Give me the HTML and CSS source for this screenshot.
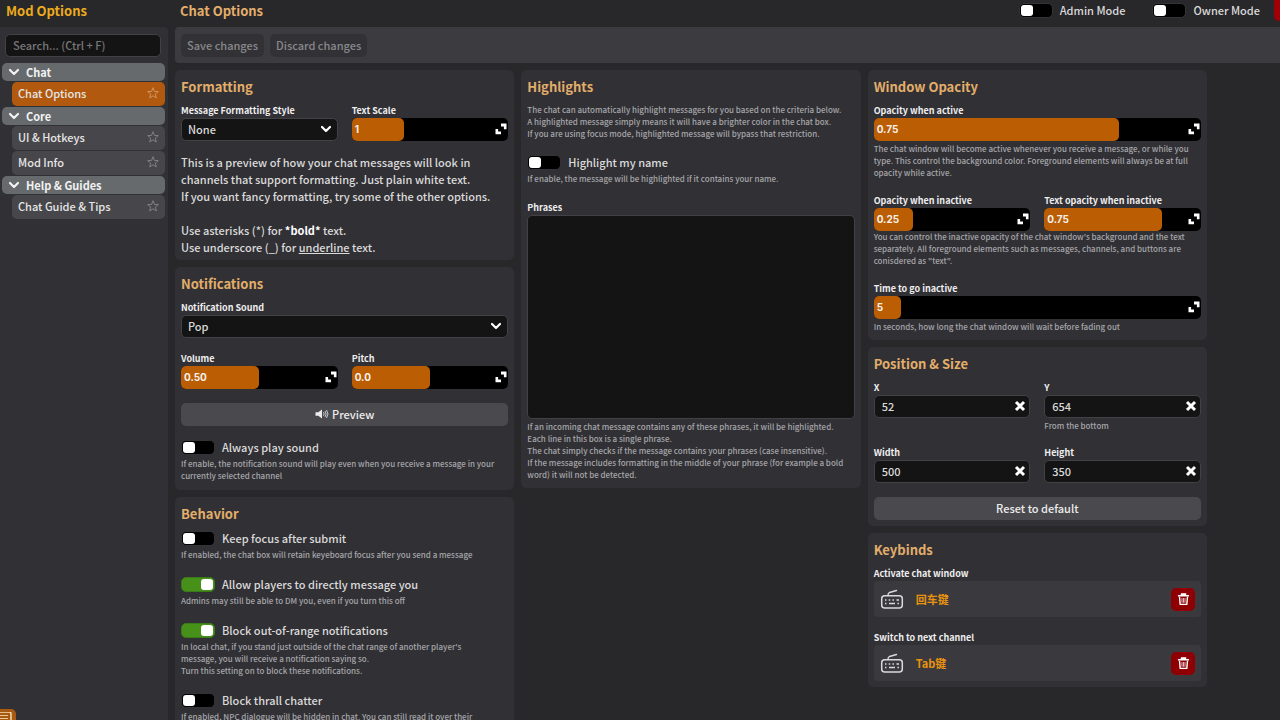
FILE: index.html
```html
<!DOCTYPE html>
<html lang="en">
<head>
<meta charset="UTF-8">
<meta name="viewport" content="width=device-width, initial-scale=1.0">
<title>Mod Options</title>
<link rel="stylesheet" href="styles.css">
</head>
<body>

<!-- shared icons -->
<svg class="sprite" width="0" height="0" aria-hidden="true">
  <symbol id="i-chevron" viewBox="0 0 12 12"><path d="M2 4l4 4 4-4" fill="none" stroke="currentColor" stroke-width="2.200" stroke-linecap="round" stroke-linejoin="round"/></symbol>
  <symbol id="i-star" viewBox="0 0 12 12"><path d="M6 .7l1.400 3.700 3.900.2-3 2.500 1 3.800L6 8.800l-3.300 2.100 1-3.800-3-2.500 3.900-.2z" fill="none" stroke="currentColor" stroke-width=".8" stroke-linejoin="round"/></symbol>
  <symbol id="i-expand" viewBox="0 0 12 12"><path d="M6 .5H11.500V6.200H8.900V3.600H6zM.5 6H3.100V8.500H6V11.200H.5z" fill="currentColor"/></symbol>
  <symbol id="i-cross" viewBox="0 0 12 12"><path d="M2 2l8 8M10 2l-8 8" fill="none" stroke="currentColor" stroke-width="3"/></symbol>
  <symbol id="i-speaker" viewBox="0 0 14 12"><path d="M.5 4.200h2.800L7 1.500v9L3.300 7.800H.5z" fill="currentColor"/><path d="M8.500 4.200q1.300 1.800 0 3.600M10 3q2.300 3 0 6M11.500 2q3 4 0 8" fill="none" stroke="currentColor" stroke-width=".8"/></symbol>
  <symbol id="i-keyboard" viewBox="0 0 24 20"><rect x="1.700" y="6.700" width="20.600" height="12.200" rx="3" fill="none" stroke="currentColor" stroke-width="1.500"/><path d="M8 6.500C8 2.500 11 3.500 16.500 1.500" fill="none" stroke="currentColor" stroke-width="1.400" stroke-linecap="round"/><path d="M5 11h1.500M8.700 11h1.500M12.400 11h1.500M16.500 11h2.500M5 14.500h1.500M9 14.500h6M17.500 14.500H19" stroke="currentColor" stroke-width="1.500"/></symbol>
  <symbol id="i-trash" viewBox="0 0 14 14"><path d="M1 3h12M5 2.500V1.200h4v1.300" fill="none" stroke="currentColor" stroke-width="1.800"/><path d="M2.700 4l.7 8.300h7.200l.7-8.300" fill="none" stroke="currentColor" stroke-width="1.500" stroke-linejoin="round"/><path d="M5.400 5.500v5M7 5.500v5M8.600 5.500v5" stroke="currentColor" stroke-width=".8"/></symbol>
</svg>

<div class="app">
  <aside class="sidebar">
    <h1 class="app-title">Mod Options</h1>
    <div class="sidebar-panel">
      <input class="text-box search" type="search" placeholder="Search... (Ctrl + F)" aria-label="Search">
      <nav class="nav">
        <button class="nav-group"><svg class="icon"><use href="#i-chevron"/></svg>Chat</button>
        <a class="nav-item active" href="#">Chat Options<svg class="icon"><use href="#i-star"/></svg></a>
        <button class="nav-group"><svg class="icon"><use href="#i-chevron"/></svg>Core</button>
        <a class="nav-item" href="#">UI &amp; Hotkeys<svg class="icon"><use href="#i-star"/></svg></a>
        <a class="nav-item" href="#">Mod Info<svg class="icon"><use href="#i-star"/></svg></a>
        <button class="nav-group"><svg class="icon"><use href="#i-chevron"/></svg>Help &amp; Guides</button>
        <a class="nav-item" href="#">Chat Guide &amp; Tips<svg class="icon"><use href="#i-star"/></svg></a>
      </nav>
    </div>
  </aside>

  <main class="main">
    <header class="header">
      <h2 class="page-title">Chat Options</h2>
      <div class="modes">
        <label class="toggle"><input type="checkbox">Admin Mode</label>
        <label class="toggle"><input type="checkbox">Owner Mode</label>
      </div>
    </header>

    <div class="toolbar">
      <button class="btn" disabled>Save changes</button>
      <button class="btn" disabled>Discard changes</button>
    </div>

    <div class="columns">
      <div class="column">
        <section class="card">
          <h3>Formatting</h3>
          <div class="row">
            <div class="field">
              <label for="style">Message Formatting Style</label>
              <div class="select">
                <select id="style"><option>None</option></select>
                <svg class="icon"><use href="#i-chevron"/></svg>
              </div>
            </div>
            <div class="field">
              <label for="scale">Text Scale</label>
              <div class="slider">
                <input id="scale" type="range" min="0" max="3" step="any" value="1">
                <span class="fill" style="width: 33.300%"></span>
                <output for="scale">1</output>
                <svg class="icon"><use href="#i-expand"/></svg>
              </div>
            </div>
          </div>
          <div class="sample">
            This is a preview of how your chat messages will look in channels that support formatting. Just plain white text.<br>
            If you want fancy formatting, try some of the other options.<br>
            <br>
            Use asterisks (*) for <b>*bold*</b> text.<br>
            Use underscore (_) for <u>underline</u> text.
          </div>
        </section>

        <section class="card">
          <h3>Notifications</h3>
          <div class="field">
            <label for="sound">Notification Sound</label>
            <div class="select">
              <select id="sound"><option>Pop</option></select>
              <svg class="icon"><use href="#i-chevron"/></svg>
            </div>
          </div>
          <div class="row">
            <div class="field">
              <label for="volume">Volume</label>
              <div class="slider">
                <input id="volume" type="range" min="0" max="1" step="any" value="0.5">
                <span class="fill" style="width: 50%"></span>
                <output for="volume">0.50</output>
                <svg class="icon"><use href="#i-expand"/></svg>
              </div>
            </div>
            <div class="field">
              <label for="pitch">Pitch</label>
              <div class="slider">
                <input id="pitch" type="range" min="-1" max="1" step="any" value="0">
                <span class="fill" style="width: 50%"></span>
                <output for="pitch">0.0</output>
                <svg class="icon"><use href="#i-expand"/></svg>
              </div>
            </div>
          </div>
          <button class="btn wide"><svg class="icon speaker"><use href="#i-speaker"/></svg>Preview</button>
          <div class="option">
            <label class="toggle"><input type="checkbox">Always play sound</label>
            <p class="help">If enable, the notification sound will play even when you receive a message in your currently selected channel</p>
          </div>
        </section>

        <section class="card">
          <h3>Behavior</h3>
          <div class="option">
            <label class="toggle"><input type="checkbox">Keep focus after submit</label>
            <p class="help">If enabled, the chat box will retain keyeboard focus after you send a message</p>
          </div>
          <div class="option">
            <label class="toggle"><input type="checkbox" checked>Allow players to directly message you</label>
            <p class="help">Admins may still be able to DM you, even if you turn this off</p>
          </div>
          <div class="option">
            <label class="toggle"><input type="checkbox" checked>Block out-of-range notifications</label>
            <p class="help">In local chat, if you stand just outside of the chat range of another player's<br>message, you will receive a notification saying so.<br>Turn this setting on to block these notifications.</p>
          </div>
          <div class="option">
            <label class="toggle"><input type="checkbox">Block thrall chatter</label>
            <p class="help">If enabled, NPC dialogue will be hidden in chat. You can still read it over their</p>
          </div>
        </section>
      </div>

      <div class="column">
        <section class="card">
          <h3>Highlights</h3>
          <p class="help intro">The chat can automatically highlight messages for you based on the criteria below.<br>A highlighted message simply means it will have a brighter color in the chat box.<br>If you are using focus mode, highlighted message will bypass that restriction.</p>
          <div class="option">
            <label class="toggle"><input type="checkbox">Highlight my name</label>
            <p class="help">If enable, the message will be highlighted if it contains your name.</p>
          </div>
          <div class="field">
            <label for="phrases">Phrases</label>
            <textarea class="text-box" id="phrases"></textarea>
            <p class="help">If an incoming chat message contains any of these phrases, it will be highlighted.<br>Each line in this box is a single phrase.<br>The chat simply checks if the message contains your phrases (case insensitive).<br>If the message includes formatting in the middle of your phrase (for example a bold word) it will not be detected.</p>
          </div>
        </section>
      </div>

      <div class="column">
        <section class="card">
          <h3>Window Opacity</h3>
          <div class="field">
            <label for="active">Opacity when active</label>
            <div class="slider">
              <input id="active" type="range" min="0" max="1" step="any" value="0.75">
              <span class="fill" style="width: 75%"></span>
              <output for="active">0.75</output>
              <svg class="icon"><use href="#i-expand"/></svg>
            </div>
            <p class="help">The chat window will become active whenever you receive a message, or while you type. This control the background color. Foreground elements will always be at full opacity while active.</p>
          </div>
          <div class="field">
            <div class="row">
              <div class="field">
                <label for="inactive">Opacity when inactive</label>
                <div class="slider">
                  <input id="inactive" type="range" min="0" max="1" step="any" value="0.25">
                  <span class="fill" style="width: 25%"></span>
                  <output for="inactive">0.25</output>
                  <svg class="icon"><use href="#i-expand"/></svg>
                </div>
              </div>
              <div class="field">
                <label for="text-inactive">Text opacity when inactive</label>
                <div class="slider">
                  <input id="text-inactive" type="range" min="0" max="1" step="any" value="0.75">
                  <span class="fill" style="width: 75%"></span>
                  <output for="text-inactive">0.75</output>
                  <svg class="icon"><use href="#i-expand"/></svg>
                </div>
              </div>
            </div>
            <p class="help">You can control the inactive opacity of the chat window's background and the text separately. All foreground elements such as messages, channels, and buttons are conisdered as "text".</p>
          </div>
          <div class="field">
            <label for="timeout">Time to go inactive</label>
            <div class="slider">
              <input id="timeout" type="range" min="0" max="60" step="any" value="5">
              <span class="fill" style="width: 8.300%"></span>
              <output for="timeout">5</output>
              <svg class="icon"><use href="#i-expand"/></svg>
            </div>
            <p class="help">In seconds, how long the chat window will wait before fading out</p>
          </div>
        </section>

        <section class="card">
          <h3>Position &amp; Size</h3>
          <div class="row">
            <div class="field">
              <label for="x">X</label>
              <div class="clearable">
                <input class="text-box" id="x" type="text" value="52">
                <button aria-label="Clear X"><svg class="icon"><use href="#i-cross"/></svg></button>
              </div>
            </div>
            <div class="field">
              <label for="y">Y</label>
              <div class="clearable">
                <input class="text-box" id="y" type="text" value="654">
                <button aria-label="Clear Y"><svg class="icon"><use href="#i-cross"/></svg></button>
              </div>
              <p class="help">From the bottom</p>
            </div>
          </div>
          <div class="row">
            <div class="field">
              <label for="width">Width</label>
              <div class="clearable">
                <input class="text-box" id="width" type="text" value="500">
                <button aria-label="Clear width"><svg class="icon"><use href="#i-cross"/></svg></button>
              </div>
            </div>
            <div class="field">
              <label for="height">Height</label>
              <div class="clearable">
                <input class="text-box" id="height" type="text" value="350">
                <button aria-label="Clear height"><svg class="icon"><use href="#i-cross"/></svg></button>
              </div>
            </div>
          </div>
          <button class="btn wide">Reset to default</button>
        </section>

        <section class="card">
          <h3>Keybinds</h3>
          <div class="field">
            <span class="label">Activate chat window</span>
            <div class="keybind">
              <svg class="keyboard"><use href="#i-keyboard"/></svg>
              <span class="key" lang="zh-CN">回车键</span>
              <button class="delete" aria-label="Remove keybind"><svg><use href="#i-trash"/></svg></button>
            </div>
          </div>
          <div class="field">
            <span class="label">Switch to next channel</span>
            <div class="keybind">
              <svg class="keyboard"><use href="#i-keyboard"/></svg>
              <span class="key" lang="zh-CN">Tab键</span>
              <button class="delete" aria-label="Remove keybind"><svg><use href="#i-trash"/></svg></button>
            </div>
          </div>
        </section>
      </div>
    </div>
  </main>
</div>

<button class="close" aria-label="Close"></button>
<button class="chat-corner" aria-label="Open chat"><svg viewBox="0 0 12 8"><path d="M0 0h9q2 0 2 2v6" fill="none" stroke="#f3dcb8" stroke-width="1.500"/><path d="M0 3.500h8M0 6.500h8" stroke="#e9c796" stroke-width="1"/></svg></button>

</body>
</html>
```
FILE: styles.css
```css
* {
  box-sizing: border-box;
}
body {
  margin: 0;
  height: 100vh;
  overflow: hidden;
  background-color: #28272a;
  color: #dadada;
  font-family: "Noto Sans CJK SC", "Noto Sans", sans-serif;
  font-size: 11px;
  font-weight: 500;
  line-height: 16px;
}
h1, h2, h3, p {
  margin: 0;
}
button, input, select, textarea {
  font: inherit;
  color: inherit;
  margin: 0;
}
button {
  border: none;
  padding: 0;
  background: none;
  cursor: pointer;
}
.sprite {
  position: absolute;
}
.icon {
  width: 12px;
  height: 12px;
  flex: none;
}

/* frame */
.app {
  display: flex;
  height: 100%;
}
.sidebar {
  width: 168px;
  flex: none;
  display: flex;
  flex-direction: column;
}
.main {
  flex: 1;
  min-width: 0;
  margin-left: 7px;
}
.app-title, .page-title {
  font-size: 13px;
  font-weight: bold;
  line-height: 21px;
}
.app-title {
  height: 27px;
  padding-left: 6px;
  color: #ecab1c;
}
.page-title, .card h3 {
  color: #e2ae6a;
}
.header {
  height: 27px;
  display: flex;
  justify-content: space-between;
  padding: 0 20px 0 5px;
}
.modes {
  display: flex;
  gap: 27px;
  padding-top: 3px;
}

/* sidebar */
.sidebar-panel {
  flex: 1;
  padding: 7px 3px 0 2px;
  background-color: #313035;
  border-top-right-radius: 4px;
}
.text-box {
  display: block;
  width: 100%;
  height: 23px;
  padding: 0 7px 2px;
  background-color: #141414;
  border: 1px solid #424146;
  border-radius: 5px;
  outline: none;
}
.search {
  width: auto;
  margin: 0 4px 6px 3px;
  min-width: 156px;
}
.search::placeholder {
  color: #77777a;
  opacity: 1;
}
.nav {
  display: flex;
  flex-direction: column;
}
.nav-group {
  display: flex;
  align-items: center;
  gap: 6px;
  height: 18px;
  padding-left: 6px;
  margin-bottom: 1px;
  background-color: #666a6c;
  border-radius: 5px;
  color: #f2f2f2;
  font-weight: bold;
}
.nav-item {
  display: flex;
  align-items: center;
  justify-content: space-between;
  height: 24px;
  padding: 0 6px 2px;
  margin: 0 0 1px 10px;
  background-color: #47464b;
  border-radius: 5px;
  color: #e6e6e6;
  text-decoration: none;
}
.nav-item .icon {
  color: #8e8e91;
}
.nav-item.active {
  background-color: #b0590f;
}
.nav-item.active .icon {
  color: #d8a273;
}

/* buttons */
.toolbar {
  display: flex;
  gap: 6px;
  padding: 7px 6px 6px;
  background-color: #3c3b40;
  border-radius: 4px 0 0 4px;
}
.btn {
  height: 23px;
  padding: 0 6px 2px;
  background-color: #4a494e;
  border-radius: 5px;
  color: #ececec;
}
.btn:disabled {
  background-color: #323236;
  color: #88888a;
  cursor: default;
}
.btn.wide {
  display: flex;
  align-items: center;
  justify-content: center;
  gap: 3px;
  width: 100%;
}
.speaker {
  width: 14px;
}

/* cards */
.columns {
  display: grid;
  grid-template-columns: repeat(3, minmax(0, 1fr));
  gap: 7px;
  padding: 7px 73px 0 0;
  align-items: start;
}
.column {
  display: flex;
  flex-direction: column;
  gap: 7px;
}
.card {
  display: flex;
  flex-direction: column;
  gap: 14px;
  padding: 6px;
  background-color: #313035;
  border-radius: 5px;
}
.card h3 {
  margin-bottom: -8px;
  font-size: 13px;
  font-weight: bold;
  line-height: 22px;
}
.row {
  display: grid;
  grid-template-columns: 1fr 1fr;
  gap: 14px;
}
.field > label, .label {
  display: block;
  font-size: 9px;
  font-weight: bold;
  line-height: 14px;
  color: #eeeeee;
}
.help {
  margin-top: 2px;
  font-size: 8px;
  line-height: 12px;
  color: #a6a6a9;
}
.help.intro, .row + .help {
  margin-top: 0;
}
.option .help {
  margin-bottom: 2px;
}
.help.intro, .card > .field > .help {
  margin-bottom: 1px;
}
.sample {
  margin: -1px 0 -2px;
  line-height: 17px;
}
.sample b {
  color: #ffffff;
}

/* controls */
.select {
  position: relative;
}
.select select {
  display: block;
  appearance: none;
  width: 100%;
  height: 23px;
  padding: 0 6px 2px;
  background-color: #141414;
  border: 1px solid #424146;
  border-radius: 5px;
}
.select .icon {
  position: absolute;
  right: 6px;
  top: 5px;
  color: #ffffff;
  pointer-events: none;
}
.slider {
  position: relative;
  height: 23px;
}
.slider input {
  display: block;
  appearance: none;
  width: 100%;
  height: 100%;
  background-color: #000000;
  border-radius: 5px;
}
.slider input::-webkit-slider-thumb {
  appearance: none;
  width: 1px;
  height: 23px;
}
.slider .fill, .slider output, .slider .icon {
  position: absolute;
  pointer-events: none;
}
.slider .fill {
  left: 0;
  top: 0;
  height: 100%;
  background-color: #ba5d03;
  border-radius: 5px;
}
.slider output {
  left: 3px;
  top: 0;
  font-family: Inter, sans-serif;
  font-size: 10px;
  font-weight: bold;
  line-height: 23px;
  color: #f5f0ea;
}
.slider .icon {
  right: 1px;
  top: 5px;
  color: #ffffff;
}
.toggle {
  display: flex;
  align-items: flex-start;
  gap: 7px;
  height: 16px;
  line-height: 14px;
}
.toggle input {
  appearance: none;
  width: 34px;
  height: 15px;
  padding: 1px;
  background-color: #000000;
  border: 1px solid #333237;
  border-radius: 5px;
}
.toggle input::before {
  content: "";
  display: block;
  width: 12px;
  height: 11px;
  background-color: #ffffff;
  border-radius: 3px;
}
.toggle input:checked {
  background-color: #47901a;
  border-color: #3b7a18;
}
.toggle input:checked::before {
  margin-left: auto;
}
.clearable {
  position: relative;
}
.clearable button {
  position: absolute;
  right: 4px;
  top: 5px;
  height: 12px;
  line-height: 0;
  color: #ffffff;
}
textarea.text-box {
  height: 204px;
  resize: none;
}

/* keybinds */
.keybind {
  display: flex;
  align-items: center;
  gap: 12px;
  height: 36px;
  padding: 0 6px;
  background-color: #3a393e;
  border-radius: 4px;
}
.keyboard {
  width: 24px;
  height: 20px;
}
.key {
  flex: 1;
  color: #e8930f;
  font-weight: bold;
}
.delete {
  display: grid;
  place-items: center;
  width: 24px;
  height: 23px;
  background-color: #8f0005;
  border-radius: 5px;
  color: #ffffff;
}
.delete svg {
  width: 13px;
  height: 13px;
}

/* buttons that run off the window edge */
.close {
  position: fixed;
  right: -18px;
  top: -3px;
  width: 24px;
  height: 24px;
  background-color: #a00006;
  border-radius: 5px;
}
.chat-corner {
  position: fixed;
  left: -8px;
  bottom: -12px;
  width: 24px;
  height: 23px;
  background-color: #a85a12;
  border-radius: 5px;
}
.chat-corner svg {
  position: absolute;
  left: 8px;
  top: 3px;
  width: 12px;
  height: 8px;
}
```
